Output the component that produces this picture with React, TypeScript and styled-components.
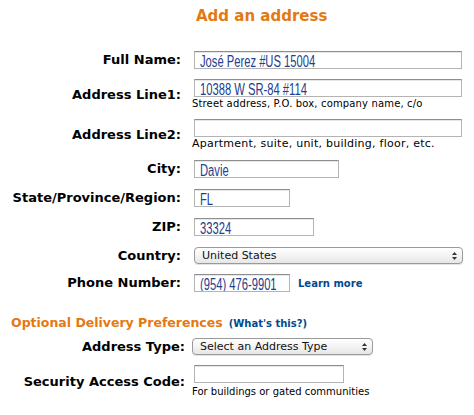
import React from "react";
import styled, { createGlobalStyle } from "styled-components";

const Global = createGlobalStyle`
  html, body { margin: 0; padding: 0; background: #fff; }
  body { font-family: "DejaVu Sans", Verdana, sans-serif; color: #000; }
`;

const Page = styled.div`
  width: 474px;
  height: 415px;
  overflow: hidden;
  padding-top: 7px;
  box-sizing: border-box;
`;

const Title = styled.h1`
  margin: 0 0 26px 196px;
  font-family: "DejaVu Sans", Verdana, sans-serif;
  font-weight: bold;
  font-size: 15px;
  line-height: 18px;
  color: #e47911;
`;

const Row = styled.div<{ $label: number; $gap: number; $mb: number }>`
  display: grid;
  grid-template-columns: ${(p) => p.$label}px 1fr;
  column-gap: ${(p) => p.$gap}px;
  align-items: center;
  margin-bottom: ${(p) => p.$mb}px;
`;

const Label = styled.label`
  text-align: right;
  font-weight: bold;
  font-size: 13px;
  line-height: 16px;
  white-space: nowrap;
`;

const Field = styled.div<{ $offset?: number }>`
  display: flex;
  align-items: center;
  gap: 8px;
  padding-left: ${(p) => p.$offset ?? 0}px;
`;

const FieldCol = styled.div`
  display: flex;
  flex-direction: column;
`;

const Input = styled.div<{ $w: number }>`
  box-sizing: border-box;
  width: ${(p) => p.$w}px;
  height: 18px;
  border: 1px solid #b4b4b4;
  border-top-color: #8e8e8e;
  box-shadow: inset 0 1px 0 #e6e6e6;
  padding: 0 5px;
  white-space: nowrap;
  overflow: hidden;
  flex-shrink: 0;
`;

const Value = styled.span`
  display: inline-block;
  font-family: "Liberation Sans", Arial, sans-serif;
  font-size: 16px;
  line-height: 16px;
  color: #23408e;
  transform: scaleX(0.7);
  transform-origin: 0 50%;
`;

const Hint = styled.div<{ $ml?: number; $mt?: number; $size?: number; $ls?: number }>`
  margin-left: ${(p) => p.$ml ?? -2}px;
  margin-top: ${(p) => p.$mt ?? 0}px;
  font-size: ${(p) => p.$size ?? 10}px;
  letter-spacing: ${(p) => p.$ls ?? 0}px;
  line-height: 13px;
  color: #000;
  white-space: nowrap;
`;

const Select = styled.div<{ $w: number }>`
  box-sizing: border-box;
  width: ${(p) => p.$w}px;
  height: 17px;
  border: 1px solid #9a9a9a;
  border-radius: 4px;
  background: linear-gradient(#ffffff, #f1f1f1 60%, #e6e6e6);
  box-shadow: 0 1px 0 #e4e4e4;
  display: flex;
  align-items: center;
  justify-content: space-between;
  padding: 0 4px 0 7px;
  font-size: 11px;
  line-height: 15px;
  color: #111;
`;

const Link = styled.a`
  font-size: 10px;
  font-weight: bold;
  color: #004b91;
  text-decoration: none;
  white-space: nowrap;
`;

const Section = styled.div`
  margin: 22px 0 6px 11px;
  display: flex;
  align-items: baseline;
  gap: 6px;
`;

const SectionTitle = styled.h2`
  margin: 0;
  font-size: 12.5px;
  line-height: 18px;
  font-weight: bold;
  color: #e47911;
`;

const Small = styled.span`
  font-size: 10px;
  font-weight: bold;
  color: #004b91;
`;

const Arrows = () => (
  <svg width="7" height="10" viewBox="0 0 7 10">
    <path d="M3.5 1 L6 4 L1 4 Z" fill="#333" />
    <path d="M3.5 9 L6 6 L1 6 Z" fill="#333" />
  </svg>
);

export default function App() {
  return (
    <Page>
      <Global />
      <Title>Add an address</Title>

      <Row $label={181} $gap={13} $mb={10}>
        <Label>Full Name:</Label>
        <Field>
          <Input $w={268}><Value>José Perez #US 15004</Value></Input>
        </Field>
      </Row>

      <Row $label={181} $gap={13} $mb={9}>
        <Label>Address Line1:</Label>
        <FieldCol>
          <Input $w={268}><Value>10388 W SR-84 #114</Value></Input>
          <Hint $size={10} $ls={0.15}>Street address, P.O. box, company name, c/o</Hint>
        </FieldCol>
      </Row>

      <Row $label={181} $gap={13} $mb={10}>
        <Label>Address Line2:</Label>
        <FieldCol>
          <Input $w={268}></Input>
          <Hint $size={11} $ls={0.25}>Apartment, suite, unit, building, floor, etc.</Hint>
        </FieldCol>
      </Row>

      <Row $label={181} $gap={13} $mb={11}>
        <Label>City:</Label>
        <Field>
          <Input $w={145}><Value>Davie</Value></Input>
        </Field>
      </Row>

      <Row $label={181} $gap={13} $mb={11}>
        <Label>State/Province/Region:</Label>
        <Field>
          <Input $w={96}><Value>FL</Value></Input>
        </Field>
      </Row>

      <Row $label={181} $gap={13} $mb={11}>
        <Label>ZIP:</Label>
        <Field>
          <Input $w={120}><Value>33324</Value></Input>
        </Field>
      </Row>

      <Row $label={181} $gap={13} $mb={10}>
        <Label>Country:</Label>
        <Field>
          <Select $w={269}>
            <span>United States</span>
            <Arrows />
          </Select>
        </Field>
      </Row>

      <Row $label={181} $gap={13} $mb={0}>
        <Label>Phone Number:</Label>
        <Field>
          <Input $w={96}><Value>(954) 476-9901</Value></Input>
          <Link href="#">Learn more</Link>
        </Field>
      </Row>

      <Section>
        <SectionTitle>Optional Delivery Preferences</SectionTitle>
        <Small>(What's this?)</Small>
      </Section>

      <Row $label={185} $gap={7} $mb={10}>
        <Label>Address Type:</Label>
        <Field>
          <Select $w={181}>
            <span>Select an Address Type</span>
            <Arrows />
          </Select>
        </Field>
      </Row>

      <Row $label={185} $gap={7} $mb={0}>
        <Label>Security Access Code:</Label>
        <FieldCol>
          <Field $offset={2}>
            <Input $w={150}></Input>
          </Field>
          <Hint $ml={0} $mt={2}>For buildings or gated communities</Hint>
        </FieldCol>
      </Row>
    </Page>
  );
}
